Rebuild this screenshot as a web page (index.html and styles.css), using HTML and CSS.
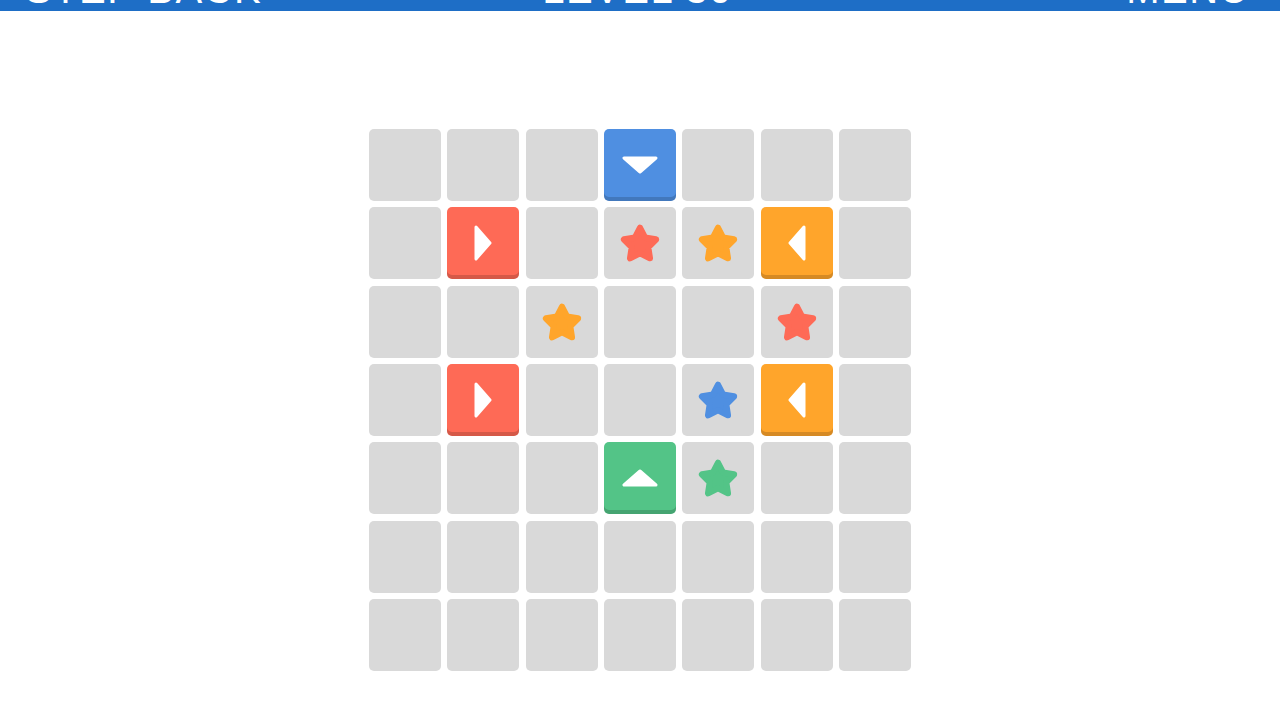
FILE: index.html
```html
<!DOCTYPE html>
<html>
<head>
    <title>Arrows Puzzle</title>
    <link rel="stylesheet" href="styles.css">
</head>
<body>
    <svg class="defs" width="0" height="0">
        <symbol id="star" viewBox="-20 -21.55 40 40">
            <polygon points="0,-16 4.82,-6.634 15.217,-4.944 7.799,2.534 9.405,12.944 0,8.2 -9.405,12.944 -7.799,2.534 -15.217,-4.944 -4.82,-6.634"/>
        </symbol>
    </svg>

    <div class="topbar">
        <span class="bar-item left">STEP BACK</span>
        <span class="bar-item">LEVEL 30</span>
        <span class="bar-item right">MENU</span>
    </div>

    <div class="board">
        <!-- row 1 -->
        <div class="cell"></div>
        <div class="cell"></div>
        <div class="cell"></div>
        <div class="cell tile blue">
            <svg class="tri-h" viewBox="0 0 36 18"><polygon points="2,2 34,2 18,16"/></svg>
        </div>
        <div class="cell"></div>
        <div class="cell"></div>
        <div class="cell"></div>

        <!-- row 2 -->
        <div class="cell"></div>
        <div class="cell tile red">
            <svg class="tri-v" viewBox="0 0 18 36"><polygon points="2,2 16,18 2,34"/></svg>
        </div>
        <div class="cell"></div>
        <div class="cell"><svg class="star red-star"><use href="#star"/></svg></div>
        <div class="cell"><svg class="star orange-star"><use href="#star"/></svg></div>
        <div class="cell tile orange">
            <svg class="tri-v" viewBox="0 0 18 36"><polygon points="16,2 2,18 16,34"/></svg>
        </div>
        <div class="cell"></div>

        <!-- row 3 -->
        <div class="cell"></div>
        <div class="cell"></div>
        <div class="cell"><svg class="star orange-star"><use href="#star"/></svg></div>
        <div class="cell"></div>
        <div class="cell"></div>
        <div class="cell"><svg class="star red-star"><use href="#star"/></svg></div>
        <div class="cell"></div>

        <!-- row 4 -->
        <div class="cell"></div>
        <div class="cell tile red">
            <svg class="tri-v" viewBox="0 0 18 36"><polygon points="2,2 16,18 2,34"/></svg>
        </div>
        <div class="cell"></div>
        <div class="cell"></div>
        <div class="cell"><svg class="star blue-star"><use href="#star"/></svg></div>
        <div class="cell tile orange">
            <svg class="tri-v" viewBox="0 0 18 36"><polygon points="16,2 2,18 16,34"/></svg>
        </div>
        <div class="cell"></div>

        <!-- row 5 -->
        <div class="cell"></div>
        <div class="cell"></div>
        <div class="cell"></div>
        <div class="cell tile green">
            <svg class="tri-h" viewBox="0 0 36 18"><polygon points="2,16 34,16 18,2"/></svg>
        </div>
        <div class="cell"><svg class="star green-star"><use href="#star"/></svg></div>
        <div class="cell"></div>
        <div class="cell"></div>

        <!-- row 6 -->
        <div class="cell"></div>
        <div class="cell"></div>
        <div class="cell"></div>
        <div class="cell"></div>
        <div class="cell"></div>
        <div class="cell"></div>
        <div class="cell"></div>

        <!-- row 7 -->
        <div class="cell"></div>
        <div class="cell"></div>
        <div class="cell"></div>
        <div class="cell"></div>
        <div class="cell"></div>
        <div class="cell"></div>
        <div class="cell"></div>
    </div>
</body>
</html>
```

FILE: styles.css
```css
body {
    margin: 0;
    background: #ffffff;
    font-family: "Liberation Sans", Arial, sans-serif;
}
.defs {
    position: absolute;
}
.topbar {
    height: 50px;
    margin-top: -39px;
    padding: 0 30px 2px 25px;
    box-sizing: border-box;
    background-color: #1e6ec6;
    display: grid;
    grid-template-columns: 1fr auto 1fr;
    align-items: end;
}
.bar-item {
    color: white;
    font-size: 40px;
    line-height: 40px;
    letter-spacing: 1.5px;
    white-space: nowrap;
}
.left {
    justify-self: start;
}
.right {
    justify-self: end;
}
.board {
    width: 542px;
    margin: 118px auto 0;
    display: grid;
    grid-template-columns: repeat(7, 72px);
    grid-auto-rows: 72px;
    gap: 6.33px;
}
.cell {
    background: #d9d9d9;
    border-radius: 5px;
    display: flex;
    align-items: center;
    justify-content: center;
}
.tile {
    box-shadow: inset 0 -4px 0 rgba(0,0,0,0.16);
}
.blue { background: #4f8fe1; }
.red { background: #fe6a56; }
.orange { background: #ffa52b; }
.green { background: #53c487; }
.tile polygon {
    fill: white;
    stroke: white;
    stroke-width: 3;
    stroke-linejoin: round;
}
.tri-h {
    width: 36px;
    height: 18px;
}
.tri-v {
    width: 18px;
    height: 36px;
}
.star {
    width: 42px;
    height: 42px;
    fill: currentColor;
    stroke: currentColor;
    stroke-width: 6;
    stroke-linejoin: round;
}
.red-star { color: #fe6a56; }
.orange-star { color: #ffa52b; }
.blue-star { color: #4f8fe1; }
.green-star { color: #53c487; }
```
